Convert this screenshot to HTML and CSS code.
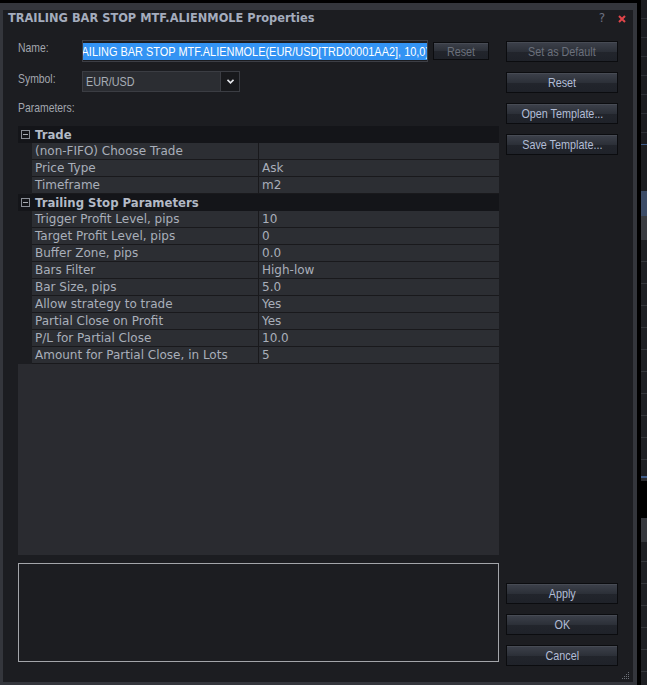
FILE: index.html
```html
<!DOCTYPE html>
<html lang="en">
<head>
    <meta charset="UTF-8">
    <title>TRAILING BAR STOP MTF.ALIENMOLE Properties</title>
    <link rel="stylesheet" href="styles.css">
</head>
<body>
    <div class="screen">
        <div class="window">
            <div class="titlebar">
                <span class="title">TRAILING BAR STOP MTF.ALIENMOLE Properties</span>
                <span class="help">?</span>
                <svg class="close" width="8" height="8" viewBox="0 0 8 8">
                    <path d="M1 1 L7 7 M7 1 L1 7" stroke="#e0454a" stroke-width="2"/>
                </svg>
            </div>

            <div class="content">
                <div class="left">
                    <div class="field name-row">
                        <span class="label"><span class="nw">Name:</span></span>
                        <div class="textbox">
                            <span class="selected">TRAILING BAR STOP MTF.ALIENMOLE(EUR/USD[TRD00001AA2], 10,0)</span>
                        </div>
                        <button class="btn btn-small disabled"><span class="nw">Reset</span></button>
                    </div>

                    <div class="field symbol-row">
                        <span class="label"><span class="nw">Symbol:</span></span>
                        <div class="select">
                            <span class="select-value"><span class="nw">EUR/USD</span></span>
                            <span class="select-arrow">
                                <svg width="7" height="5" viewBox="0 0 7 5">
                                    <path d="M0.5 0.8 L3.5 3.8 L6.5 0.8" fill="none" stroke="#e6e8ec" stroke-width="1.6"/>
                                </svg>
                            </span>
                        </div>
                    </div>

                    <div class="label params-label"><span class="nw">Parameters:</span></div>

                    <!-- property grid -->
                    <div class="grid">
                        <div class="category"><span class="toggle"></span>Trade</div>
                        <div class="prop"><span class="gutter"></span><span class="pname">(non-FIFO) Choose Trade</span><span class="pvalue"></span></div>
                        <div class="prop"><span class="gutter"></span><span class="pname">Price Type</span><span class="pvalue">Ask</span></div>
                        <div class="prop"><span class="gutter"></span><span class="pname">Timeframe</span><span class="pvalue">m2</span></div>

                        <div class="category"><span class="toggle"></span>Trailing Stop Parameters</div>
                        <div class="prop"><span class="gutter"></span><span class="pname">Trigger Profit Level, pips</span><span class="pvalue">10</span></div>
                        <div class="prop"><span class="gutter"></span><span class="pname">Target Profit Level, pips</span><span class="pvalue">0</span></div>
                        <div class="prop"><span class="gutter"></span><span class="pname">Buffer Zone, pips</span><span class="pvalue">0.0</span></div>
                        <div class="prop"><span class="gutter"></span><span class="pname">Bars Filter</span><span class="pvalue">High-low</span></div>
                        <div class="prop"><span class="gutter"></span><span class="pname">Bar Size, pips</span><span class="pvalue">5.0</span></div>
                        <div class="prop"><span class="gutter"></span><span class="pname">Allow strategy to trade</span><span class="pvalue">Yes</span></div>
                        <div class="prop"><span class="gutter"></span><span class="pname">Partial Close on Profit</span><span class="pvalue">Yes</span></div>
                        <div class="prop"><span class="gutter"></span><span class="pname">P/L for Partial Close</span><span class="pvalue">10.0</span></div>
                        <div class="prop"><span class="gutter"></span><span class="pname">Amount for Partial Close, in Lots</span><span class="pvalue">5</span></div>
                    </div>

                    <div class="description"></div>
                </div>

                <div class="right">
                    <div class="btn-group">
                        <button class="btn disabled"><span class="nw">Set as Default</span></button>
                        <button class="btn"><span class="nw">Reset</span></button>
                        <button class="btn"><span class="nw">Open Template...</span></button>
                        <button class="btn"><span class="nw">Save Template...</span></button>
                    </div>
                    <div class="btn-group bottom-group">
                        <button class="btn"><span class="nw">Apply</span></button>
                        <button class="btn"><span class="nw">OK</span></button>
                        <button class="btn"><span class="nw">Cancel</span></button>
                    </div>
                </div>
            </div>

            <svg class="grip" width="8" height="8" viewBox="0 0 8 8" fill="#6c7078">
                <rect x="6" y="0" width="1" height="1"/>
                <rect x="4" y="2" width="1" height="1"/><rect x="6" y="2" width="1" height="1"/>
                <rect x="2" y="4" width="1" height="1"/><rect x="4" y="4" width="1" height="1"/><rect x="6" y="4" width="1" height="1"/>
                <rect x="0" y="6" width="1" height="1"/><rect x="2" y="6" width="1" height="1"/><rect x="4" y="6" width="1" height="1"/><rect x="6" y="6" width="1" height="1"/>
            </svg>
        </div>

        <!-- piece of the application window behind the dialog -->
        <div class="backapp">
            <div class="bk bk-a"></div>
            <div class="bk bk-b"></div>
            <div class="bk bk-sel"></div>
            <div class="bk bk-c"></div>
            <div class="bk bk-rows"></div>
            <div class="bk bk-black"></div>
            <div class="bk bk-rows2"></div>
        </div>
    </div>
</body>
</html>
```

FILE: styles.css
```css
* {
    box-sizing: border-box;
}

body {
    margin: 0;
    background-color: #000;
    font-family: "Liberation Sans", Arial, sans-serif;
    font-size: 13px;
    overflow: hidden;
}

.screen {
    display: flex;
    height: 685px;
}

/* narrow windows font: Arial squeezed to Arial Narrow widths */
.nw {
    display: inline-block;
    white-space: nowrap;
    transform: scaleX(0.83);
    transform-origin: left center;
}

.window {
    position: relative;
    width: 637px;
    height: 682px;
    margin-top: 3px;
    background-color: #1c1d21;
    border-style: solid;
    border-color: #34363c;
    border-width: 7px 4px 3px 3px;
    display: flex;
    flex-direction: column;
}

/* title bar */
.titlebar {
    height: 30px;
    display: flex;
    align-items: flex-start;
    padding: 2px 7px 0 5px;
}

.title {
    flex: 1;
    font-family: "DejaVu Sans", Verdana, sans-serif;
    font-weight: bold;
    font-size: 11.4px;
    line-height: 13px;
    color: #a4acbd;
}

.help {
    font-family: "DejaVu Sans", Verdana, sans-serif;
    font-size: 12px;
    line-height: 13px;
    color: #6c7282;
    margin-right: 13px;
}

.close {
    margin-top: 3px;
}

/* main area */
.content {
    flex: 1;
    display: flex;
    padding: 0 15px;
    gap: 7px;
}

.left {
    width: 481px;
    display: flex;
    flex-direction: column;
}

.right {
    width: 112px;
}

.label {
    color: #a2a6ae;
    font-size: 13px;
    line-height: 15px;
}

.label .nw {
    transform: scaleX(0.8);
}

.field {
    display: flex;
    align-items: center;
}

.field .label {
    width: 64px;
    flex: none;
    align-self: flex-start;
}

.name-row {
    height: 22px;
}

.textbox {
    width: 346px;
    height: 22px;
    border: 1px solid #3d3f46;
    background-color: #1c1d21;
    display: flex;
    justify-content: flex-end;
    align-items: center;
    overflow: hidden;
}

.selected {
    flex: none;
    white-space: nowrap;
    background-color: #3393f3;
    color: #fff;
    font-size: 13px;
    line-height: 17px;
    margin-right: -2px;
    transform: scaleX(0.842);
    transform-origin: right center;
}

.symbol-row {
    height: 21px;
    margin-top: 9px;
}

.select {
    width: 158px;
    height: 21px;
    display: flex;
    border: 1px solid #3b3d43;
    background-color: #2b2d32;
}

.select-value {
    flex: 1;
    padding-left: 3px;
    line-height: 19px;
    color: #a8adb6;
}

.select-arrow {
    width: 19px;
    display: flex;
    align-items: center;
    justify-content: center;
    background-color: #18191c;
    border-left: 1px solid #3b3d43;
}

.params-label {
    margin-top: 8px;
}

/* property grid */
.grid {
    margin-top: 11px;
    height: 429px;
    background-color: #2a2b30;
    font-family: "DejaVu Sans", Verdana, sans-serif;
    font-size: 12px;
    color: #a9afba;
}

.category {
    height: 17px;
    display: flex;
    align-items: center;
    background-color: #141519;
    font-size: 11.7px;
    font-weight: bold;
    color: #b3bac6;
}

.toggle {
    position: relative;
    width: 9px;
    height: 9px;
    margin: 0 5px 0 3px;
    border: 1px solid #8a8e96;
}

.toggle::after {
    content: "";
    position: absolute;
    left: 1px;
    top: 3px;
    width: 5px;
    height: 1px;
    background-color: #a9adb4;
}

.prop {
    height: 17px;
    display: flex;
}

.gutter {
    width: 14px;
    background-color: #1c1d21;
}

.pname,
.pvalue {
    display: block;
    line-height: 16px;
    padding-left: 3px;
    background-color: #2c2e33;
    border-bottom: 1px solid #19191c;
    white-space: nowrap;
    overflow: hidden;
}

.pname {
    width: 227px;
    border-right: 1px solid #19191c;
}

.pvalue {
    flex: 1;
}

.description {
    margin-top: 8px;
    height: 99px;
    border: 1px solid #a3a5aa;
}

/* buttons */
.btn-group {
    display: flex;
    flex-direction: column;
    gap: 10px;
    margin-top: 1px;
}

.bottom-group {
    margin-top: 428px;
}

.btn {
    width: 112px;
    height: 21px;
    padding: 0;
    font-family: inherit;
    font-size: 13px;
    line-height: 15px;
    color: #b2bdd6;
    border: 1px solid #0b0c0f;
    background: linear-gradient(#3d414b, #2c3038 50%, #22252c 51%, #1f2229);
    box-shadow: inset 0 1px 0 rgba(255, 255, 255, 0.06);
    display: flex;
    justify-content: center;
    align-items: center;
}

.btn .nw {
    transform-origin: center center;
}

.btn.disabled {
    color: #6b707b;
}

.btn-small {
    width: 56px;
    height: 18px;
    margin-left: 5px;
}

.grip {
    position: absolute;
    right: 3px;
    bottom: 2px;
}

/* application behind the dialog */
.backapp {
    width: 6px;
    margin-left: 4px;
    display: flex;
    flex-direction: column;
}

.bk {
    flex: none;
}

.bk-a {
    height: 145px;
    background: repeating-linear-gradient(#1b1c20 0, #1b1c20 18px, #2e3035 18px, #2e3035 19px);
    border-bottom: 1px solid #3d5a88;
}

.bk-b {
    height: 46px;
    background-color: #1c1d21;
}

.bk-sel {
    height: 25px;
    background-color: #3b4b66;
}

.bk-c {
    height: 24px;
    background-color: #3a3c41;
}

.bk-rows {
    height: 238px;
    background: repeating-linear-gradient(#1e1f23 0, #1e1f23 21px, #34363b 21px, #34363b 22px);
    border-bottom: 2px solid #3d5a88;
}

.bk-black {
    height: 40px;
    background: linear-gradient(#2a2b30 0, #2a2b30 3px, #000 3px);
}

.bk-rows2 {
    flex: 1;
    background: linear-gradient(#36383d 0, #36383d 24px, transparent 24px),
        repeating-linear-gradient(#1e1f23 0, #1e1f23 21px, #34363b 21px, #34363b 22px);
}
```
